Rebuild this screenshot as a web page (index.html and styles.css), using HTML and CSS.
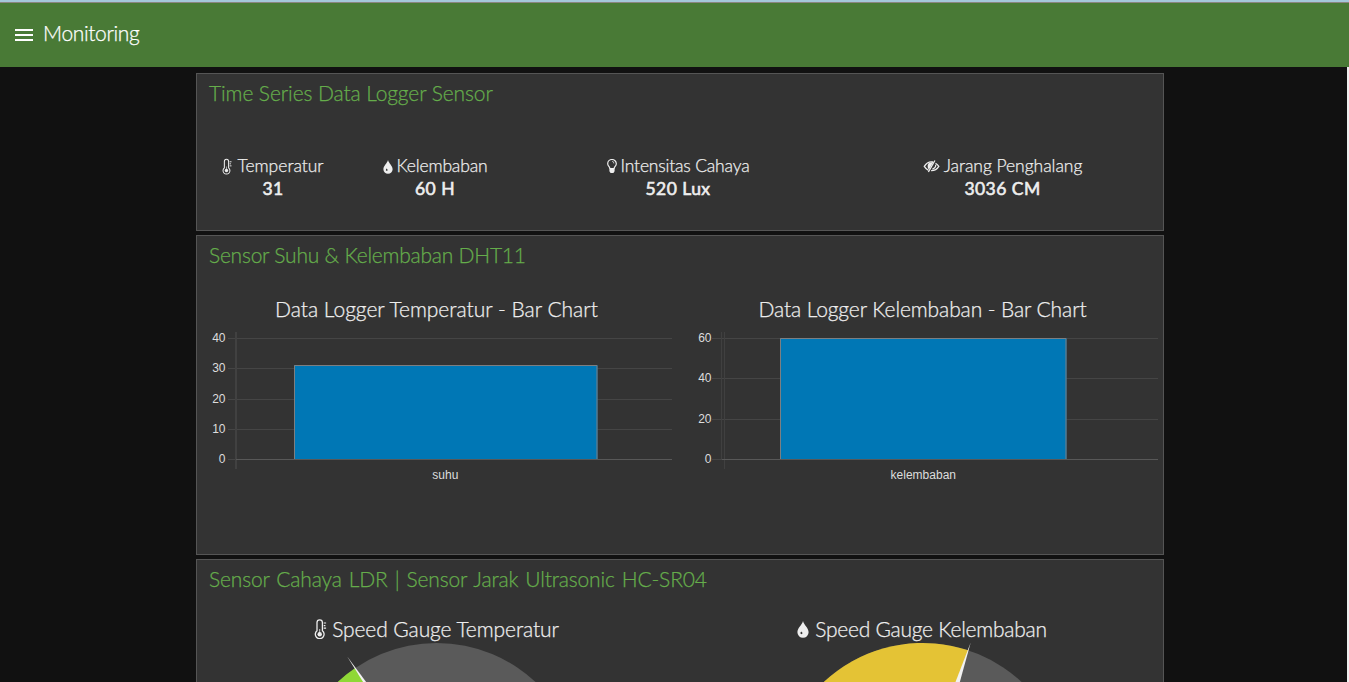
FILE: index.html
```html
<!DOCTYPE html>
<html lang="id">
<head>
<meta charset="utf-8">
<title>Monitoring</title>
<link rel="stylesheet" href="styles.css">
</head>
<body>
<svg class="defs" width="0" height="0">
  <symbol id="thermo" viewBox="0 0 14 20">
    <path d="M3 11.800V3.500a2.700 2.700 0 0 1 5.400 0v8.300a4.400 4.400 0 1 1-5.400 0z" fill="none" stroke="currentColor" stroke-width="1.300"/>
    <circle cx="5.700" cy="15.200" r="2.200" fill="currentColor"/>
    <path d="M9.700 4h2.400M9.700 6.600h1.700M9.700 9.200h2.400" stroke="currentColor" stroke-width="1.200"/>
    <path d="M5.700 10v4" stroke="currentColor" stroke-width=".8"/>
  </symbol>
  <symbol id="drop" viewBox="0 0 12 17">
    <path fill-rule="evenodd" d="M6 0C6.900 4 11.600 7 11.600 11.200a5.600 5.600 0 0 1-11.200 0C.4 7 5.100 4 6 0zM4.300 10.400c-.4.6-.9 1-.9 1.700a1 1 0 0 0 2.100 0c0-.7-.8-1.100-1.200-1.700z" fill="currentColor"/>
  </symbol>
  <symbol id="bulb" viewBox="0 0 10 15">
    <path d="M2.900 9.500C2.700 7.700.7 7 .7 4.700a4.300 4.200 0 0 1 8.600 0C9.300 7 7.300 7.700 7.100 9.500z" fill="none" stroke="currentColor" stroke-width="1.200"/>
    <path d="M2.400 9.300h5.200v3L6.400 14H3.600l-1.200-1.700zM5 2.200v.9c1 0 1.600.4 1.600 1.400h.7C7.300 3 6.400 2.200 5 2.200z" fill="currentColor"/>
  </symbol>
  <symbol id="eye-off" viewBox="0 0 16 13">
    <path d="M9.500 2C5.500 1.300 2.500 3.500.8 6.400 2 8.400 3.500 9.700 5 10.300M12 3.200c1.400.8 2.500 1.900 3.300 3.200-1.700 2.800-4.500 4.400-7.700 4.300M12.200 4.600c.3 2-1.200 3.700-3.300 4.500" fill="none" stroke="currentColor" stroke-width="1.300"/>
    <path d="M10 1.800 5.500 9.600C4 8.300 3.600 5.500 5 3.200z" fill="currentColor"/>
    <path d="M11.400.5 4.900 12" stroke="currentColor" stroke-width="1.300"/>
  </symbol>
</svg>
<div class="loading-bar"></div>
<header class="toolbar">
  <svg class="menu" viewBox="0 0 18 12" width="18" height="12"><path d="M0 0h18v2H0zM0 5h18v2H0zM0 10h18v2H0z" fill="#fff"/></svg>
  <h1 class="title">Monitoring</h1>
</header>
<main class="content">
  <section class="card card-stats">
    <h2 class="card-title t1">Time Series Data Logger Sensor</h2>
    <div class="stats">
      <div class="stat first"><div class="label"><svg class="i-thermo"><use href="#thermo"/></svg><span class="l1">Temperatur</span></div><b class="v1">31</b></div>
      <div class="stat"><div class="label"><svg class="i-drop"><use href="#drop"/></svg><span class="l2">Kelembaban</span></div><b class="v2">60 H</b></div>
      <div class="stat"><div class="label"><svg class="i-bulb"><use href="#bulb"/></svg><span class="l3">Intensitas Cahaya</span></div><b class="v3">520 Lux</b></div>
      <div class="stat last"><div class="label"><svg class="i-eye"><use href="#eye-off"/></svg><span class="l4">Jarang Penghalang</span></div><b class="v4">3036 CM</b></div>
    </div>
  </section>
  <section class="card card-charts">
    <h2 class="card-title t2">Sensor Suhu &amp; Kelembaban DHT11</h2>
    <div class="halves">
      <div class="half">
        <h3 class="sub c1">Data Logger Temperatur - Bar Chart</h3>
        <svg class="chart" width="483" height="165" viewBox="197 327 483 165">
          <path class="grid" d="M228 338.500h444M228 368.500h444M228 399.500h444M228 429.500h444M228 459.500h8"/>
          <path class="axis" d="M236 332v137"/>
          <path class="zero" d="M236 459.500h436"/>
          <rect class="bar" x="294" y="365" width="303.500" height="94"/>
          <path class="edge" d="M294.500 459v-93.500h302.500v93.500"/>
          <g class="ticks"><text x="225.500" y="342">40</text><text x="225.500" y="372">30</text><text x="225.500" y="403">20</text><text x="225.500" y="433">10</text><text x="225.500" y="463">0</text></g>
          <text class="name" x="445.300" y="479">suhu</text>
        </svg>
      </div>
      <div class="half">
        <h3 class="sub c2">Data Logger Kelembaban - Bar Chart</h3>
        <svg class="chart" width="483" height="165" viewBox="680 327 483 165">
          <path class="grid" d="M712 338.500h446M712 378.500h446M712 419.500h446M712 459.500h10"/>
          <path class="grid thin" d="M721.500 332v127M724.500 332v137"/>
          <path class="zero" d="M722 459.500h436"/>
          <rect class="bar" x="780" y="338" width="286.500" height="121"/>
          <path class="edge" d="M780.500 459V338.500h285.500V459"/>
          <g class="ticks"><text x="711.500" y="342">60</text><text x="711.500" y="382">40</text><text x="711.500" y="423">20</text><text x="711.500" y="463">0</text></g>
          <text class="name" x="923.300" y="479">kelembaban</text>
        </svg>
      </div>
    </div>
  </section>
  <section class="card card-gauges">
    <h2 class="card-title t3">Sensor Cahaya LDR | Sensor Jarak Ultrasonic HC-SR04</h2>
    <div class="halves">
      <div class="half">
        <h3 class="sub s1"><svg class="g-thermo"><use href="#thermo"/></svg><span class="g1">Speed Gauge Temperatur</span></h3>
        <svg class="gauge" width="483" height="160" viewBox="197 642 483 160">
          <path fill="#5a5a5a" d="M291.700 788a145 145 0 0 1 290 0z"/>
          <path fill="#8fd836" d="M436.700 788H291.700A145 145 0 0 1 355.200 668z"/>
          <path fill="#f2f2f2" d="M347.200 656.500 442 784.300 431.400 791.700z"/>
        </svg>
      </div>
      <div class="half">
        <h3 class="sub s2"><svg class="g-drop"><use href="#drop"/></svg><span class="g2">Speed Gauge Kelembaban</span></h3>
        <svg class="gauge" width="483" height="160" viewBox="680 642 483 160">
          <path fill="#5a5a5a" d="M777.700 788a145 145 0 0 1 290 0z"/>
          <path fill="#e4c335" d="M922.700 788H777.700A145 145 0 0 1 968.300 650.300z"/>
          <path fill="#f2f2f2" d="M970.700 642.500 930.200 790 915.700 785.500z"/>
        </svg>
      </div>
    </div>
  </section>
</main>
</body>
</html>
```
FILE: styles.css
```css
* { box-sizing: border-box; }
body {
  margin: 0;
  height: 682px;
  overflow: hidden;
  display: flex;
  flex-direction: column;
  background: #111;
  color: #eee;
  font-family: Lato, "Liberation Sans", sans-serif;
  font-weight: 300;
}
.defs { display: block; flex: none; height: 0; }
.loading-bar { flex: none; height: 3px; background: #a5c8db; border-bottom: 1px solid #8b8580; }
.toolbar {
  flex: none;
  height: 64px;
  padding: 0 15px;
  display: flex;
  align-items: center;
  gap: 10px;
  background: #497a36;
  color: #fff;
}
.menu { display: block; }
.title { margin: -5px 0 0; font-size: 21px; line-height: 28px; font-weight: 300; letter-spacing: -0.35px; }
.title, .card-title, .sub, .label { -webkit-text-stroke: 0.25px currentColor; }
.content {
  flex: 1;
  min-height: 0;
  overflow: hidden;
  padding: 6px 183px 0 196px;
  border-right: 2px solid #eee;
  display: flex;
  flex-direction: column;
  gap: 4px;
}
.card { flex: none; width: 968px; border: 1px solid #555; background: #333; }
.card-stats { height: 158px; }
.card-charts { height: 320px; }
.card-gauges { height: 320px; }
.card-title {
  margin: 0;
  padding: 5px 12px 0;
  height: 36px;
  line-height: 28px;
  font-size: 21px;
  font-weight: 300;
  color: #65ad4b;
  white-space: nowrap;
}
.t1 { letter-spacing: -0.1px; }
.t2 { letter-spacing: -0.23px; }
.t3 { letter-spacing: -0.16px; word-spacing: 1.5px; }
.stats { display: grid; grid-template-columns: 150px 176px 310px 330px; padding-top: 44px; }
.stat { display: flex; flex-direction: column; align-items: center; white-space: nowrap; font-size: 17.500px; line-height: 23px; }
.first { padding-left: 2px; }
.last { padding-left: 9px; }
.stat b { font-weight: 400; font-size: 17.500px; line-height: 23px; letter-spacing: 0.45px; -webkit-text-stroke: 0.6px currentColor; }
.label { display: flex; align-items: center; gap: 4px; height: 23px; }
.label svg { position: relative; top: 1px; }
.label svg, .sub svg { flex: none; }
.l2 { letter-spacing: -0.15px; }
.l3 { letter-spacing: -0.18px; }
.l4 { letter-spacing: -0.05px; }
.i-thermo { width: 11px; height: 17px; }
.i-drop { width: 10px; height: 14px; }
.i-bulb { width: 10px; height: 15px; }
.i-eye { width: 17px; height: 13px; }
.halves { display: grid; grid-template-columns: 483px 483px; }
.card-charts .halves { padding-top: 23px; }
.card-gauges .halves { padding-top: 19px; }
.sub {
  margin: 0;
  height: 28px;
  display: flex;
  justify-content: center;
  align-items: center;
  gap: 4px;
  font-size: 21px;
  line-height: 28px;
  font-weight: 300;
  white-space: nowrap;
}
.c1 { padding-right: 4px; }
.c2 { padding-left: 2px; letter-spacing: -0.1px; }
.s1 { padding-right: 4px; }
.s2 { padding-left: 1px; gap: 6px; }
.g1 { letter-spacing: -0.09px; }
.g2 { letter-spacing: -0.25px; }
.g-thermo { width: 14px; height: 20px; }
.g-drop { width: 12px; height: 17px; }
.chart { display: block; margin-top: 4px; font-family: "Liberation Sans", sans-serif; font-size: 12px; font-weight: 400; }
.gauge { display: block; margin-top: -1px; }
.ticks { fill: #ddd; text-anchor: end; }
.name { fill: #ddd; text-anchor: middle; }
.grid { fill: none; stroke: #454545; }
.thin { stroke: #404040; }
.axis { stroke: #414141; stroke-width: 2; }
.zero { stroke: #585858; }
.bar { fill: #0077b5; }
.edge { fill: none; stroke: #7c7f82; }
```
